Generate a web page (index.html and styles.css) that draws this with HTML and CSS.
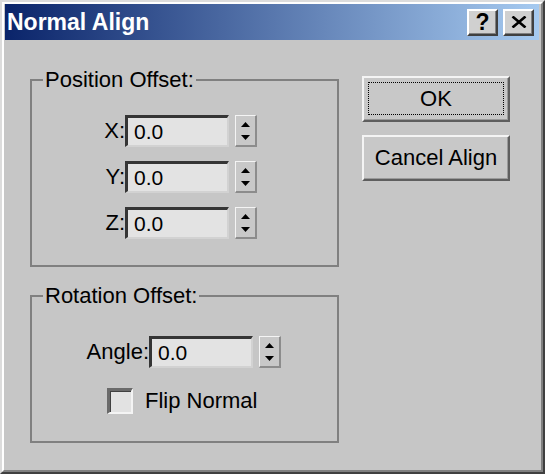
FILE: index.html
```html
<!DOCTYPE html>
<html>
<head>
<meta charset="utf-8">
<link rel="stylesheet" href="styles.css">
</head>
<body>
<div class="window">
  <div class="frame">
    <div class="titlebar">
      <span class="title">Normal Align</span>
      <div class="tb-buttons">
        <div class="tb-btn help">?</div>
        <div class="tb-btn close">
          <svg width="16" height="12" viewBox="0 0 16 12"><path d="M1.5 0.5 L14.5 11.5 M14.5 0.5 L1.5 11.5" stroke="#000" stroke-width="2.6" fill="none"/></svg>
        </div>
      </div>
    </div>
    <div class="body">
      <div class="groups">
        <fieldset class="group pos">
          <legend>Position Offset:</legend>
          <div class="field"><span class="lbl">X:</span><div class="input">0.0</div><div class="spin"><svg width="19" height="29" viewBox="0 0 19 29"><polygon points="9.5,6 5,11 14,11" fill="#000"/><polygon points="5,19 14,19 9.5,24" fill="#000"/></svg></div></div>
          <div class="field"><span class="lbl">Y:</span><div class="input">0.0</div><div class="spin"><svg width="19" height="29" viewBox="0 0 19 29"><polygon points="9.5,6 5,11 14,11" fill="#000"/><polygon points="5,19 14,19 9.5,24" fill="#000"/></svg></div></div>
          <div class="field"><span class="lbl">Z:</span><div class="input">0.0</div><div class="spin"><svg width="19" height="29" viewBox="0 0 19 29"><polygon points="9.5,6 5,11 14,11" fill="#000"/><polygon points="5,19 14,19 9.5,24" fill="#000"/></svg></div></div>
        </fieldset>
        <fieldset class="group rot">
          <legend>Rotation Offset:</legend>
          <div class="field"><span class="lbl wide">Angle:</span><div class="input">0.0</div><div class="spin"><svg width="19" height="29" viewBox="0 0 19 29"><polygon points="9.5,6 5,11 14,11" fill="#000"/><polygon points="5,19 14,19 9.5,24" fill="#000"/></svg></div></div>
          <div class="check-row"><span class="checkbox"></span><span class="check-lbl">Flip Normal</span></div>
        </fieldset>
      </div>
      <div class="buttons">
        <div class="btn default"><span class="focus">OK</span></div>
        <div class="btn">Cancel Align</div>
      </div>
    </div>
  </div>
</div>
</body>
</html>
```
FILE: styles.css
```css
html, body {
  margin: 0;
  padding: 0;
  background: #c6c6c6;
}
body {
  font-family: "Liberation Sans", Arial, sans-serif;
  color: #000;
}
.window {
  width: 545px;
  height: 474px;
  box-sizing: border-box;
  border: 2px solid;
  border-color: #dcdcdc #404040 #404040 #dcdcdc;
  background: #c6c6c6;
}
.frame {
  height: 100%;
  box-sizing: border-box;
  border: 2px solid;
  border-color: #ffffff #808080 #808080 #ffffff;
  padding: 0 2px 0 1px;
  display: flex;
  flex-direction: column;
}
.titlebar {
  height: 36px;
  flex: none;
  background: linear-gradient(to right, #0a246a, #a6caf0);
  display: flex;
  align-items: center;
  justify-content: space-between;
  padding: 0 5px 0 2px;
}
.title {
  color: #fff;
  font-weight: bold;
  font-size: 23px;
  line-height: 36px;
}
.tb-buttons {
  display: flex;
  gap: 5px;
}
.tb-btn {
  width: 31px;
  height: 27px;
  box-sizing: border-box;
  background: #d0d0d0;
  border: 2px solid;
  border-color: #ffffff #404040 #404040 #ffffff;
  box-shadow: inset -1px -1px 0 #808080;
  display: flex;
  align-items: center;
  justify-content: center;
}
.help {
  font-weight: bold;
  font-size: 23px;
  line-height: 23px;
}
.body {
  flex: 1;
  display: grid;
  grid-template-columns: 309px 148px;
  column-gap: 23px;
  padding: 28px 0 0 25px;
  align-content: start;
}
.groups {
  display: flex;
  flex-direction: column;
  gap: 17px;
}
.group {
  margin: 0;
  min-width: 0;
  box-sizing: border-box;
  border: 2px solid #808080;
  padding: 23px 0 0 11px;
}
.group.pos {
  height: 199px;
}
.group.rot {
  height: 159px;
  padding-top: 28px;
}
legend {
  font-size: 22px;
  line-height: 24px;
  padding: 0 2px;
}
.field {
  display: flex;
  align-items: center;
  height: 32px;
  margin-left: 42px;
  margin-bottom: 14px;
}
.lbl {
  width: 40px;
  text-align: right;
  font-size: 22px;
}
.lbl.wide {
  width: 64px;
}
.input {
  width: 104px;
  height: 32px;
  box-sizing: border-box;
  background: #e3e3e3;
  border-style: solid;
  border-width: 3px 2px 2px 3px;
  border-color: #353535 #d2d2d2 #d2d2d2 #353535;
  font-size: 21px;
  line-height: 27px;
  padding-left: 6px;
}
.spin {
  width: 22px;
  height: 32px;
  box-sizing: border-box;
  margin-left: 6px;
  background: #c8c8c8;
  border-style: solid;
  border-width: 1px 2px 2px 1px;
  border-color: #f4f4f4 #8c8c8c #8c8c8c #f4f4f4;
}
.spin svg {
  display: block;
}
.group.rot .field {
  margin-bottom: 20px;
}
.check-row {
  display: flex;
  align-items: center;
  margin-left: 64px;
}
.checkbox {
  width: 26px;
  height: 26px;
  box-sizing: border-box;
  background: #e2e2e2;
  border-style: solid;
  border-width: 3px 2px 2px 3px;
  border-color: #6a6a6a #f4f4f4 #f4f4f4 #6a6a6a;
  box-shadow: inset 1px 1px 0 #404040;
}
.check-lbl {
  font-size: 22px;
  margin-left: 12px;
}
.buttons {
  display: flex;
  flex-direction: column;
  gap: 13px;
  padding-top: 8px;
}
.btn {
  height: 46px;
  box-sizing: border-box;
  background: #c8c8c8;
  border: 2px solid;
  border-color: #f4f4f4 #5e5e5e #5e5e5e #f4f4f4;
  box-shadow: inset -1px -1px 0 #9a9a9a;
  display: flex;
  align-items: center;
  justify-content: center;
  font-size: 22px;
}
.btn.default {
  padding: 4px 4px 5px 4px;
}
.focus {
  flex: 1;
  align-self: stretch;
  border: 1px dotted #000;
  display: flex;
  align-items: center;
  justify-content: center;
}
```
